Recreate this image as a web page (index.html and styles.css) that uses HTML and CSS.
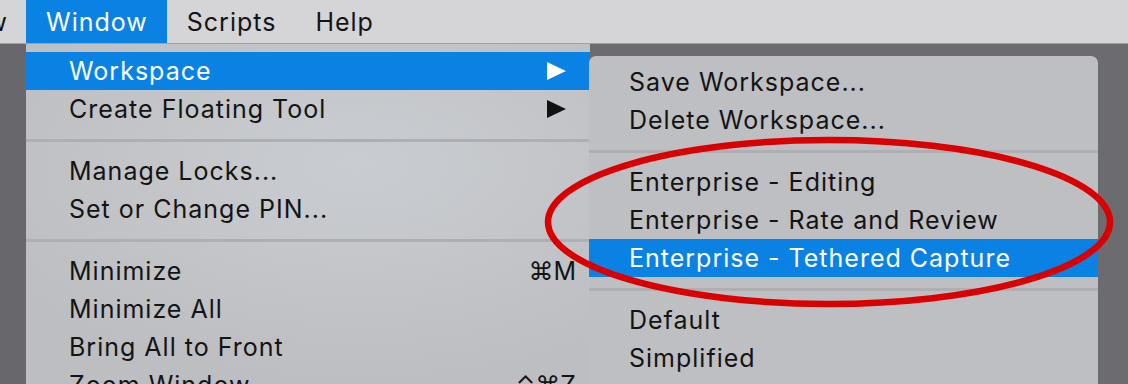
FILE: index.html
```html
<html>
<head>
<meta http-equiv="content-type" content="text/html; charset=utf-8">
<link rel="stylesheet" href="styles.css">
<title>Window menu</title>
</head>
<body>
<div class=menubar>
<div class="mtitle cut">View</div>
<div class="mtitle open">Window</div>
<div class=mtitle>Scripts</div>
<div class=mtitle>Help</div>
</div>
<div class=below>
<div class=deskleft></div>
<div class="menu main">
<div class="item hot">Workspace<span class=arrow><svg width="19" height="18" viewBox="0 0 19 18"><polygon points="0,0 19,9 0,18" fill="#fff"/></svg></span></div>
<div class=item>Create Floating Tool<span class=arrow><svg width="19" height="18" viewBox="0 0 19 18"><polygon points="0,0 19,9 0,18" fill="#111"/></svg></span></div>
<div class=sep></div>
<div class=item>Manage Locks...</div>
<div class=item>Set or Change PIN...</div>
<div class=sep></div>
<div class=item>Minimize<span class=key>⌘M</span></div>
<div class=item>Minimize All</div>
<div class=item>Bring All to Front</div>
<div class=item>Zoom Window<span class=key>⌃⌘Z</span></div>
</div>
<div class=deskright>
<div class="menu sub">
<div class=item>Save Workspace...</div>
<div class=item>Delete Workspace...</div>
<div class=sep></div>
<div class=item>Enterprise - Editing</div>
<div class=item>Enterprise - Rate and Review</div>
<div class="item hot">Enterprise - Tethered Capture</div>
<div class=sep></div>
<div class=item>Default</div>
<div class=item>Simplified</div>
</div>
</div>
</div>
<svg class=ring width="1128" height="384" viewBox="0 0 1128 384"><ellipse cx="829" cy="222" rx="281" ry="82" fill="none" stroke="#d80000" stroke-width="6.5"/></svg>
</body>
</html>
```
FILE: styles.css
```css
html,body{margin:0;padding:0}
body{width:1128px;height:384px;overflow:hidden;position:relative;background:#6a6a6e;
font-family:"Inter","Liberation Sans",sans-serif;font-size:25px;letter-spacing:1px;color:#141414}
.menubar{height:43px;border-bottom:1px solid #a2a2a5;background:#d5d5d7;display:flex;align-items:stretch}
.mtitle{padding:1px 19px 0 20px;display:flex;align-items:center}
.mtitle.cut{margin-left:-45px;width:53px;padding:1px 18px 0 0;justify-content:flex-end;overflow:hidden}
.mtitle.open{background:#0a82e4;color:#fff}
.below{display:flex;height:340px}
.deskleft{width:26px;background:#68686c}
.menu.main{width:564px;padding-top:8px;box-sizing:border-box;
background:radial-gradient(ellipse 420px 220px at 330px 120px,#c9cdd1,#c1c2c6 70%,#bdbec2)}
.deskright{flex:1;background:#6c6c70;padding:12px 30px 0 0;display:flex}
.menu.sub{flex:1;margin-left:-1px;border-radius:7px 7px 0 0;background:#bebfc3;padding-top:7px}
.item{height:38px;display:flex;align-items:center;padding-left:43px;padding-right:14px;padding-bottom:1px;box-sizing:border-box;white-space:nowrap}
.sub .item{padding-left:40px}
.item.hot{background:#0a82e4;color:#fff}
.arrow{margin-left:auto;display:flex;padding-right:10px}
.key{margin-left:auto;font-family:"Inter","DejaVu Sans",sans-serif;letter-spacing:0}
.sep{height:3px;background:#aeafb3;margin:11px 0 10px}
.ring{position:absolute;left:0;top:0}
```
